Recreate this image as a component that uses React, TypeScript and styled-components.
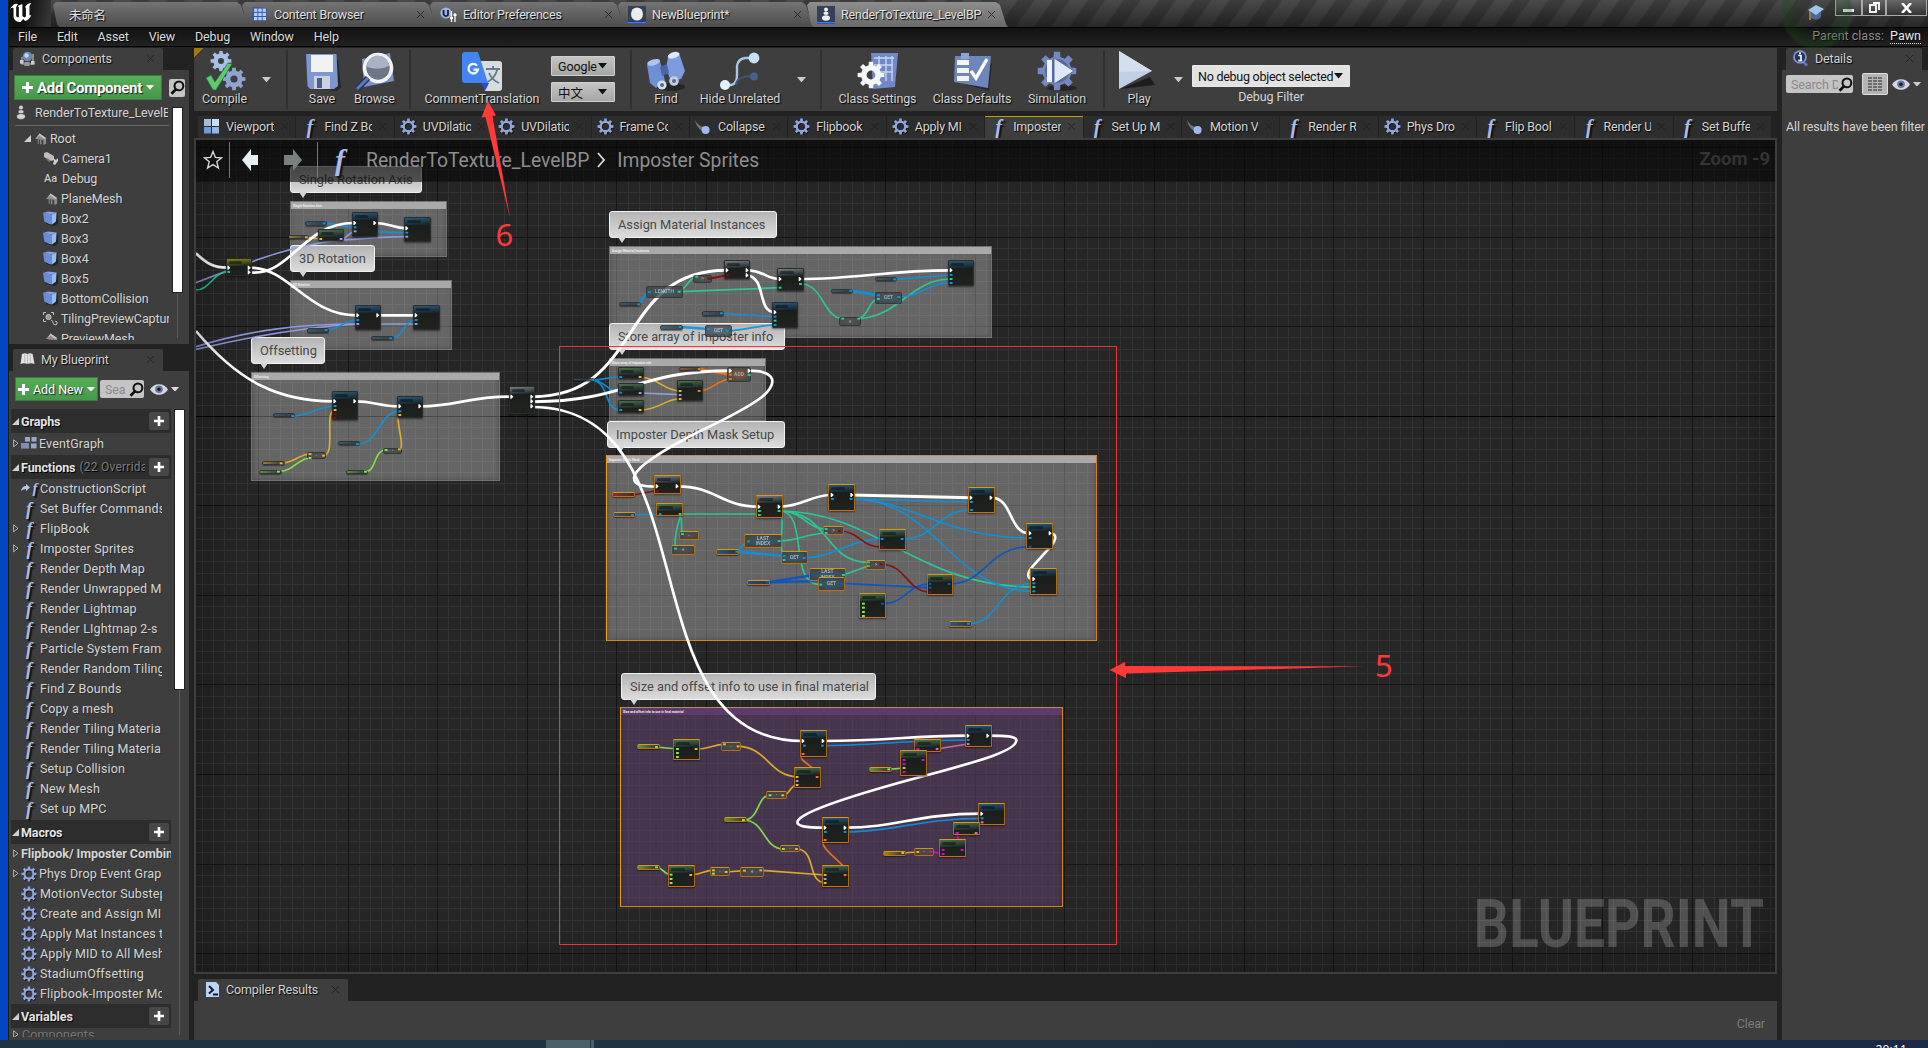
import React from "react";
import styled, { createGlobalStyle, css } from "styled-components";

const Global = createGlobalStyle`
  * { box-sizing: border-box; }
  body { margin: 0; background: #222; overflow: hidden; font-family: Roboto, "Noto Sans CJK SC", sans-serif; font-size: 13px; color: #d4d4d4; }
`;

/* ---------- shell ---------- */
const Desktop = styled.div`
  width: 1928px; height: 1048px; overflow: hidden; display: flex; flex-direction: column;
  background: #0445c0;
`;
const Win = styled.div`
  margin-left: 8px; height: 1040px; background: #222; display: flex; flex-direction: column;
  border-left: 1px solid #1a1a1a;
`;
const Taskbar = styled.div`
  height: 8px; background: linear-gradient(90deg, #20343f 0 40%, #1c2b45 80%, #1b2944);
  display: flex; overflow: hidden; color: #fff;
`;
const TaskItem = styled.div<{ $ml: number; $w: number }>`
  margin-left: ${p => p.$ml}px; width: ${p => p.$w}px; background: #4b6068;
`;
const Clock = styled.div`margin-left: auto; margin-right: 21px; font: 12px/14px "Open Sans", sans-serif; padding-top: 3px; letter-spacing: .2px;`;

/* ---------- title bar ---------- */
const TitleBar = styled.div`
  height: 28px; flex: none; display: flex; align-items: flex-end; position: relative;
  background: linear-gradient(180deg, rgba(0,0,0,0), rgba(0,0,0,.45)),
    repeating-linear-gradient(125deg, #4a4a4a 0 13px, #3c3c3c 15px 27px, #4a4a4a 29px);
  border-bottom: 1px solid #000;
`;
const Logo = styled.div`width: 42px; height: 27px; flex: none; background: linear-gradient(100deg,#111 40%,#3a3a3a);`;
const WinTab = styled.div<{ $w: number; $on?: boolean }>`
  width: ${p => p.$w}px; height: 25px; flex: none; display: flex; align-items: center; padding: 0 13px 0 12px; gap: 6px;
  margin-right: -9px; color: #e0e0e0; text-shadow: 1px 1px 1px #000; letter-spacing: -.2px; font-size: 12.5px;
  background: ${p => (p.$on ? "linear-gradient(#8e8e8e,#6a6a6a)" : "linear-gradient(#747474,#4c4c4c)")};
  clip-path: polygon(2px 3px, 5px 0, calc(100% - 12px) 0, calc(100% - 8px) 3px, calc(100% - 2px) 22px, 100% 100%, 8px 100%, 6px 22px);
`;
const TabText = styled.span<{ $pl?: number }>`flex: 1; overflow: hidden; white-space: nowrap; padding-left: ${p => p.$pl || 0}px;`;
const Close = styled.span`
  width: 7px; height: 7px; flex: none; opacity: .75;
  background: linear-gradient(45deg, transparent 44%, #1b1b1b 44% 56%, transparent 56%), linear-gradient(-45deg, transparent 44%, #1b1b1b 44% 56%, transparent 56%);
`;
const Glow = styled.div`
  position: absolute; right: 74px; top: -27px; width: 74px; height: 78px; border-radius: 50%; z-index: 2;
  background: radial-gradient(closest-side, rgba(20,70,20,.02) 40%, rgba(25,75,25,.38) 90%, transparent);
`;
const WinButtons = styled.div`
  align-self: flex-start; display: flex; height: 16px; margin-right: 1px;
`;
const WinButton = styled.div<{ $w: number }>`
  width: ${p => p.$w}px; height: 16px; border: 1px solid #aaa; border-top: 0; display: flex; align-items: center; justify-content: center;
  background: linear-gradient(#686868, #333);
`;
const MenuBar = styled.div`
  height: 19px; flex: none; display: flex; align-items: center; padding: 0 7px 2px 9px; gap: 20px; color: #dcdcdc; font-size: 12.5px; letter-spacing: -.15px;
  background: linear-gradient(#111,#222); border-bottom: 1px solid #000; text-shadow: 1px 1px 1px #000;
`;
const ParentClass = styled.div`margin-left: auto; display: flex; gap: 6px; color: #8c8c8c; letter-spacing: 0; b { font-weight: 400; color: #e8e8e8; border-bottom: 1px dotted #ddd; line-height: 14px; margin-top: 1px; }`;

/* ---------- panels ---------- */
const Body = styled.div`flex: 1; display: flex; padding-top: 1px; min-height: 0;`;
const Left = styled.div`width: 180px; display: flex; flex-direction: column; flex: none;`;
const Main = styled.div`width: 1583px; margin-left: 5px; display: flex; flex-direction: column; flex: none;`;
const Right = styled.div`width: 146px; margin-left: 5px; display: flex; flex-direction: column; flex: none;`;
const PanelTab = styled.div<{ $w: number; $mt?: number }>`
  width: ${p => p.$w}px; height: 22px; margin: ${p => p.$mt || 0}px 0 0 4px; background: #3e3e3e; flex: none;
  display: flex; align-items: center; gap: 6px; padding: 0 9px 1px 7px; text-shadow: 1px 1px 1px #000; border-radius: 2px 2px 0 0; font-size: 12.5px; letter-spacing: -.15px;
`;
const Panel = styled.div<{ $h?: number }>`
  background: #3e3e3e; ${p => (p.$h ? `height:${p.$h}px; flex:none;` : "flex: 1; min-height: 0;")} overflow: hidden; display: flex; flex-direction: column;
`;
const Bar = styled.div<{ $h: number; $pad: string; $gap?: number; $ml?: number }>`
  height: ${p => p.$h}px; flex: none; display: flex; align-items: center; padding: ${p => p.$pad}; gap: ${p => p.$gap || 0}px; margin-left: ${p => p.$ml || 0}px;
`;
const GreenButton = styled.div<{ $w: number; $h: number; $big?: boolean }>`
  width: ${p => p.$w}px; height: ${p => p.$h}px; flex: none; display: flex; align-items: center; justify-content: center; gap: 4px; white-space: nowrap;
  background: linear-gradient(#56ad57,#47984a); border: 1px solid #3b7c3d; color: #fff; text-shadow: 1px 1px 1px #123;
  ${p => (p.$big ? css`font-size: 15px; font-weight: 700; letter-spacing: -.3px;` : css`font-size: 12.5px; letter-spacing: -.05px;`)}
`;
const Search = styled.div<{ $w: number }>`
  width: ${p => p.$w}px; height: 18px; background: #c4c4c4; border-radius: 2px; color: #8a8a8a; display: flex; align-items: center;
  padding-left: 5px; overflow: hidden; white-space: nowrap; font-size: 12.5px; flex: none; letter-spacing: -.1px;
  span { flex: 1; overflow: hidden; }
`;
const SearchBtn = styled.div`width: 17px; height: 18px; background: #c4c4c4; border-radius: 2px; display: flex; align-items: center; justify-content: center;`;
const ScrollWrap = styled.div`flex: 1; display: flex; min-height: 0;`;
const List = styled.div<{ $w: number }>`width: ${p => p.$w}px; flex: none; overflow: hidden;`;
const Track = styled.div<{ $ml: number; $mt: number }>`
  margin: ${p => p.$mt}px 0 2px ${p => p.$ml}px; width: 12px; display: flex; justify-content: center;
  background: linear-gradient(#5a5a5a,#5a5a5a) center/1px 100% no-repeat;
`;
const Thumb = styled.div<{ $h: number }>`width: 11px; height: ${p => p.$h}px; background: #fff; border: 1px solid #222;`;
const Row = styled.div<{ $pl: number; $bold?: boolean; $h?: number; $gap?: number; $ls?: number; $dim?: boolean }>`
  height: ${p => p.$h || 20}px; padding: 0 0 1px ${p => p.$pl}px; display: flex; align-items: center; gap: ${p => p.$gap ?? 3}px; white-space: nowrap; letter-spacing: ${p => p.$ls ?? 0.13}px;
  font-size: 12.5px; font-weight: ${p => (p.$bold ? 700 : 400)}; text-shadow: 1px 1px 0 rgba(0,0,0,.3); ${p => (p.$dim ? "color: #777;" : "")}
  svg { flex: none; }
`;
const Clip = styled.span<{ $w?: number }>`overflow: hidden; white-space: nowrap; ${p => (p.$w ? `width:${p.$w}px;` : "")}`;
const Divider = styled.div`height: 1px; background: #6a6a6a; margin: 3px 0 3px 6px;`;
const Header = styled.div<{ $mt?: number }>`
  height: 24px; margin: ${p => p.$mt || 0}px 0 0 2px; background: #2d2d2d; display: flex; align-items: center; font-weight: 700; padding: 0 2px 0 1px; gap: 2px; color: #e4e4e4; font-size: 12.5px;
  text-shadow: 1px 1px 0 #000; white-space: nowrap; letter-spacing: -.1px;
  small { font-size: 12px; font-weight: 400; color: #7d7d7d; width: 66px; overflow: hidden; margin-left: 2px; letter-spacing: .25px; }
`;
const PlusBox = styled.div`width: 20px; height: 18px; background: #474747; margin-left: auto; display: flex; align-items: center; justify-content: center; border-radius: 2px; flex: none;`;

/* ---------- toolbar ---------- */
const Toolbar = styled.div`
  height: 63px; background: linear-gradient(135deg, #a07818 7px, transparent 7px) 0 0/18px 18px no-repeat, #3e3e3e; display: flex; flex: none;
`;
const Tool = styled.div<{ $w: number; $ml?: number }>`
  width: ${p => p.$w}px; margin-left: ${p => p.$ml || 0}px; flex: none; display: flex; flex-direction: column; align-items: center; padding-top: 3px; white-space: nowrap;
  font-size: 12.5px; letter-spacing: -.12px; text-shadow: 1px 1px 1px #000; svg { flex: none; } span { margin-top: -1px; line-height: 15px; }
`;
const Sep = styled.div<{ $ml: number }>`width: 2px; margin: 2px 0 2px ${p => p.$ml}px; background: #303030; flex: none;`;
const Arrow = styled.div<{ $w: number }>`width: ${p => p.$w}px; flex: none; display: flex; align-items: center; justify-content: center;`;
const Combos = styled.div<{ $ml: number; $pt: number; $w: number; $gap?: number }>`
  margin-left: ${p => p.$ml}px; width: ${p => p.$w}px; padding-top: ${p => p.$pt}px; display: flex; flex-direction: column; gap: ${p => p.$gap ?? 6}px; align-items: center; font-size: 12.5px; letter-spacing: -.1px;
`;
const Combo = styled.div<{ $h: number; $light?: boolean }>`
  height: ${p => p.$h}px; width: 100%; color: #111; display: flex; align-items: center; justify-content: space-between; padding: 0 ${p => (p.$light ? "6px 0 5px" : "7px 0 6px")}; border-radius: 1px; white-space: nowrap;
  ${p => (p.$light ? "letter-spacing: -.25px;" : "")}
  background: ${p => (p.$light ? "#e2e2e2" : "linear-gradient(#c4c4c4,#a6a6a6)")}; border: 1px solid ${p => (p.$light ? "#e8e8e8" : "#cfcfcf")};
  svg { flex: none; }
`;

/* ---------- document tabs ---------- */
const DocTabs = styled.div`height: 22px; margin: 5px 4px 0; display: flex; gap: 1px; flex: none;`;
const DocTab = styled.div<{ $on?: boolean }>`
  width: 97.4px; flex: none; height: 22px; display: flex; align-items: center; padding: 0 0 2px 5px; background: ${p => (p.$on ? "#3e3e3e" : "#2d2d2d")};
  border-top: 1px solid ${p => (p.$on ? "#b8a000" : "#2d2d2d")}; text-shadow: 1px 1px 1px #000; font-size: 12.5px; letter-spacing: -.2px;
`;
const DocIcon = styled.div`width: 17px; height: 18px; margin-right: 6px; display: flex; align-items: center; justify-content: center; flex: none;`;
const DocText = styled.div`width: 48px; margin-right: 7px; overflow: hidden; white-space: nowrap; flex: none;`;
const FGlyph = styled.span<{ $s: number; $w?: number; $mr?: number }>`
  font: italic 700 ${p => p.$s}px/1 "Liberation Serif", serif; color: #a9bcec; display: inline-block; width: ${p => p.$w || 16}px; margin-right: ${p => p.$mr || 0}px; text-align: center; flex: none; text-shadow: 2px 2px 1px #111; letter-spacing: 0;
`;

/* ---------- graph ---------- */
const Graph = styled.div`
  height: 836px; flex: none; background: #262626; border: 2px solid #3e3e3e; position: relative; overflow: hidden;
`;
const Canvas = styled.div`position: absolute; left: -196px; top: -140px; width: 1928px; height: 1048px;`;
const Layer = styled.svg`position: absolute; left: 0; top: 0; width: 1928px; height: 1048px; pointer-events: none;`;
const Vignette = styled.div`position: absolute; inset: 0; box-shadow: inset 0 0 50px 8px rgba(0,0,0,.33);`;
const Crumbs = styled.div`
  position: absolute; left: 0; top: 0; right: 0; height: 42px; background: rgba(8,8,8,.62); display: flex; align-items: center; color: #8e8e8e; font-size: 19.3px; white-space: nowrap; padding: 0 5px 2px 7px;
  svg { flex: none; }
`;
const VLine = styled.div<{ $l: number; $r: number }>`width: 1px; height: 36px; background: #777; margin: 0 ${p => p.$r}px 0 ${p => p.$l}px;`;
const ZoomText = styled.div`margin-left: auto; font-weight: 700; font-size: 18.5px; color: #343434; margin-top: -3px;`;
const Watermark = styled.div`
  position: absolute; right: 11px; bottom: 14px; font: 700 66px/66px Roboto, sans-serif; color: rgba(255,255,255,.2); transform: scaleX(.834); transform-origin: 100% 50%; white-space: nowrap;
`;
type Box = { $x: number; $y: number; $w: number; $h: number };
const place = css<Box>`position: absolute; left: ${p => p.$x}px; top: ${p => p.$y}px; width: ${p => p.$w}px; height: ${p => p.$h}px;`;
const CommentBox = styled.div<Box & { $sel?: boolean; $purple?: boolean }>`
  ${place}
  background: ${p => (p.$purple ? "rgba(97,68,108,.56)" : "rgba(255,255,255,.29)")};
  border: 1px solid ${p => (p.$sel ? "#d8821c" : "rgba(140,140,140,.35)")};
  ${p => (p.$sel ? "border-left-color: #eaa010; border-top-color: #b09060;" : "")}
  box-shadow: inset 0 0 5px rgba(0,0,0,.25);
`;
const CommentHead = styled.div<{ $purple?: boolean }>`
  height: 7px; background: ${p => (p.$purple ? "#5f3b6b" : "#a9a9a9")}; color: #eee; font: 700 3.2px/9px Roboto, sans-serif; padding-left: 2px; white-space: nowrap; overflow: hidden;
`;
const Bubble = styled.div<Box>`
  ${place} border: 1px solid #f2f2f2; border-radius: 3px; background: linear-gradient(#b4b4b4,#dcdcdc); color: #484848; font-size: 12.8px; display: flex; align-items: center; padding: 0 0 1px 8px; white-space: nowrap;
  &::after { content: ""; position: absolute; left: 8px; top: 100%; border: 4px solid transparent; border-top: 6px solid #d6d6d6; border-bottom: 0; }
`;
const tones: Record<string, string> = {
  blue: "#2c5878", green: "#4f7048", gray: "#7b7b7b", yellow: "#8c8a08", red: "#8a3020", orange: "#9c5a20", navy: "#1c4a9a", gold: "#a48828", lime: "#5f9a38",
};
const edge = css<{ $sel?: boolean }>`
  border: 1px solid ${p => (p.$sel ? "#a86c14" : "#2a2e2e")};
  ${p => (p.$sel ? "border-top-color: #d49a18; border-bottom-color: #cc6e0c;" : "")}
`;
const NodeBox = styled.div<Box & { $tone: string; $sel?: boolean }>`
  ${place} ${edge} border-radius: 1px;
  background: linear-gradient(175deg, ${p => tones[p.$tone]} 0, rgba(20,34,40,.95) 100%) 0 0/100% 7px no-repeat, linear-gradient(#181c1a, #20221e);
  box-shadow: 0 1px 2px rgba(0,0,0,.5);
  &::after { content: ""; position: absolute; left: 2px; top: 2px; width: 55%; height: 3px; background: rgba(10,20,24,.55); border-radius: 2px; filter: blur(.6px); }
`;
const Pill = styled.div<Box & { $tone: string; $sel?: boolean }>`
  ${place} ${edge} border-radius: 2px;
  background: linear-gradient(90deg, ${p => tones[p.$tone]}, #30383a 90%); box-shadow: 0 1px 1px rgba(0,0,0,.5); opacity: ${p => (p.$sel ? 1 : 0.85)};
`;
const Op = styled.div<Box & { $sel?: boolean; $tone?: string; $two?: boolean }>`
  ${place} ${edge} border-radius: 2px; color: #aab4b8; font: 700 5px/5.5px Roboto, sans-serif; text-align: center; padding: 0 ${p => (p.$two ? 10 : 0)}px;
  display: flex; align-items: center; justify-content: center; opacity: ${p => (p.$sel ? 0.95 : 0.8)};
  background: radial-gradient(${p => (p.$tone === "orange" ? "#7a5130" : p.$tone === "blue" ? "#345566" : "#4c4c4c")} 30%, #424444 75%);
`;

const C = { w: "#fff", b: "#0d93dc", t: "#24cf9c", y: "#e8b428", g: "#86e84c", o: "#f47414", l: "#929ee8", r: "#880a0a", n: "#0a54c4", p: "#d870a4", m: "#f000c4" } as const;
type Ck = keyof typeof C;
type N = [number, number, number, number, string];
type O = [number, number, number, number, string, string?];
interface Section {
  x: number; y: number; sel?: boolean;
  comments: [number, number, number, number, string, boolean?, boolean?][];
  bubbles: [number, number, number, number, string][];
  nodes: N[]; pills: N[]; ops: O[];
  wires: [Ck, string, number?][];
  pins: [Ck, string][];
}

/* Section coordinates are graph units; three units make one pixel at this zoom. */
const sections: Section[] = [
  {
    x: 190, y: 170,
    comments: [[300, 94, 470, 167, "Single Rotation Axis"], [301, 330, 487, 210, "3D Rotation"], [183, 606, 747, 327, "Offsetting"]],
    bubbles: [[300, -12, 396, 81, "Single Rotation Axis"], [300, 225, 255, 81, "3D Rotation"], [183, 501, 222, 81, "Offsetting"]],
    nodes: [[486, 127, 78, 74, "blue"], [642, 142, 80, 74, "blue"], [384, 178, 78, 37, "green"], [108, 264, 78, 54, "yellow"], [495, 405, 78, 75, "blue"], [669, 405, 81, 75, "blue"], [427, 663, 77, 87, "blue"], [621, 679, 78, 65, "blue"], [957, 648, 78, 84, "gray"]],
    pills: [[344, 153, 66, 14, "blue"], [293, 195, 64, 13, "gold"], [352, 473, 66, 14, "blue"], [543, 498, 68, 13, "blue"], [250, 730, 67, 13, "blue"], [445, 814, 67, 13, "blue"], [217, 874, 68, 13, "gold"], [207, 899, 68, 13, "lime"], [469, 899, 67, 13, "lime"]],
    ops: [[352, 846, 58, 22, "·"], [580, 834, 58, 17, "·"]],
    wires: [
      ["l", "M18,338 C180,275 340,212 490,208 C550,204 590,200 648,200"], ["l", "M18,530 C180,480 330,462 503,462 H675"], ["l", "M18,538 C180,500 330,472 503,462"], ["l", "M455,207 C475,204 475,186 495,184"],
      ["b", "M402,160 C470,162 520,190 650,188", 6], ["y", "M349,202 L392,207"], ["t", "M18,360 C60,360 70,306 112,306"],
      ["b", "M408,480 C450,480 460,450 503,450"], ["b", "M600,505 C645,505 635,452 678,450"], ["b", "M308,738 C360,738 385,708 435,708"], ["b", "M502,822 C570,822 565,724 629,724"],
      ["y", "M273,880 C310,880 330,852 360,852"], ["g", "M265,905 C310,905 325,864 360,864"], ["y", "M400,857 C440,857 400,720 435,720"], ["g", "M526,905 C560,905 550,840 588,840"], ["y", "M628,838 C648,838 612,735 629,735"],
      ["w", "M18,250 C50,280 70,293 112,293", 8], ["w", "M180,307 C300,320 340,159 490,159", 8], ["w", "M180,293 C300,293 350,436 500,436", 8], ["w", "M556,159 C600,159 610,175 648,175", 8], ["w", "M566,436 H675", 8],
      ["w", "M18,483 C150,640 270,694 432,694", 8], ["w", "M497,694 C550,694 570,709 627,709", 8], ["w", "M692,709 C800,709 830,680 962,680", 8],
    ],
    pins: [["w", "494,159 554,159 650,175 116,293 177,293 177,307 503,436 563,436 678,436 434,694 494,694 629,709 689,709 965,680 1025,680 1025,694 1025,709"], ["b", "495,172 402,160 650,188 503,450 408,480 678,450 602,505 308,738 435,708 502,822 629,724"], ["l", "495,184 453,207 650,200 503,462 678,462"], ["y", "392,207 349,202 360,852 400,857 435,720 273,880 628,838 629,735"], ["g", "265,905 360,864 526,905 588,840"], ["r", "435,732 435,744"], ["t", "116,306"]],
  },
  {
    x: 560, y: 190,
    comments: [[148, 169, 1150, 277, "Assign Material Instances"], [148, 504, 472, 188, "Store array of imposter info"]],
    bubbles: [[148, 63, 504, 81, "Assign Material Instances"], [148, 399, 528, 81, "Store array of imposter info"], [141, 693, 535, 81, "Imposter Depth Mask Setup"]],
    nodes: [[493, 210, 77, 57, "gray"], [651, 234, 81, 69, "gray"], [636, 336, 78, 78, "blue"], [1164, 210, 78, 78, "blue"], [174, 530, 78, 37, "green"], [174, 580, 78, 38, "green"], [174, 630, 78, 38, "green"], [351, 570, 78, 63, "green"]],
    pills: [[176, 337, 66, 13, "blue"], [427, 362, 67, 15, "blue"], [300, 404, 68, 14, "blue"], [814, 296, 67, 12, "blue"], [946, 262, 67, 13, "blue"], [358, 531, 67, 13, "orange"], [40, 565, 66, 10, "blue"]],
    ops: [[258, 287, 110, 36, "LENGTH", "blue"], [400, 254, 58, 24, ">"], [838, 380, 67, 27, "+"], [945, 305, 80, 36, "GET", "blue"], [436, 404, 80, 36, "GET", "blue"], [502, 530, 73, 45, "ADD", "orange"]],
    wires: [
      ["t", "M357,305 L660,293"], ["t", "M357,305 C385,290 385,265 410,260"], ["t", "M722,282 C790,282 790,384 848,386"], ["t", "M896,386 C930,375 925,330 955,327"], ["t", "M896,386 C1020,380 1050,268 1172,267"],
      ["b", "M236,343 C250,325 255,310 268,306", 8], ["b", "M484,370 L645,380"], ["b", "M360,411 L445,417", 8], ["b", "M502,423 C560,420 590,406 645,405"], ["b", "M872,302 L955,316", 8], ["b", "M1004,268 L1172,255"], ["b", "M1016,321 C1090,318 1100,280 1172,279"], ["r", "M446,266 L500,256", 6],
      ["b", "M98,570 C130,570 140,562 182,561"], ["b", "M98,570 C140,575 140,605 182,608"], ["b", "M98,570 C150,580 130,660 182,660"], ["y", "M240,561 C300,565 310,602 360,603"], ["y", "M240,660 C300,660 310,627 360,627"], ["l", "M240,609 L360,614"], ["o", "M417,537 L510,554", 8], ["o", "M417,603 C460,600 470,570 510,567"],
      ["w", "M-82,620 C250,620 170,241 500,241", 9], ["w", "M-82,635 C200,635 230,542 508,542", 9], ["w", "M561,241 C610,241 620,267 658,267", 8], ["w", "M561,256 C620,262 590,366 645,367", 8], ["w", "M720,267 C900,267 980,241 1172,241", 8],
    ],
    pins: [["w", "501,241 561,241 561,256 660,267 720,267 645,367 1173,241 511,542 567,542"], ["b", "268,306 236,343 484,370 645,380 360,411 445,417 502,423 645,405 872,302 955,316 1004,268 1173,255 1173,279 1016,321 98,570 182,561 182,608 182,660"], ["t", "357,305 410,260 660,293 721,282 848,386 896,386 955,327 1173,267 645,392 567,555"], ["y", "240,561 240,660 360,603 360,627"], ["l", "240,609 360,615"], ["o", "417,537 511,554 511,567 417,603"], ["r", "446,266 502,256"]],
  },
  {
    x: 590, y: 430, sel: true,
    comments: [[49, 76, 1473, 557, "Imposter Depth Mask", true]],
    bubbles: [],
    nodes: [[191, 136, 81, 56, "gray"], [497, 196, 81, 69, "gray"], [199, 220, 81, 39, "green"], [866, 296, 81, 64, "green"], [1010, 431, 79, 64, "green"], [808, 490, 81, 76, "green"], [715, 161, 81, 80, "blue"], [1133, 170, 81, 78, "blue"], [1309, 278, 81, 79, "blue"], [1320, 413, 81, 80, "blue"]],
    pills: [[66, 187, 69, 15, "red"], [69, 247, 68, 16, "blue"], [379, 356, 69, 17, "blue"], [472, 449, 70, 15, "navy"], [1077, 574, 69, 17, "blue"]],
    ops: [[268, 304, 60, 28, "-"], [244, 346, 73, 31, "+"], [463, 313, 115, 43, "LAST INDEX", "blue"], [574, 364, 82, 40, "GET", "blue"], [699, 289, 62, 28, ">"], [658, 415, 112, 40, "LAST INDEX", "blue"], [683, 441, 81, 41, "GET", "blue"], [827, 389, 60, 29, ">"]],
    wires: [
      ["r", "M125,194 C160,194 170,183 200,183"], ["b", "M127,255 L210,252"], ["t", "M270,252 H508"], ["t", "M270,256 C280,270 270,290 277,312"], ["t", "M272,256 C262,290 252,320 256,356"],
      ["t", "M568,243 C640,243 650,297 708,297"], ["t", "M568,243 C590,260 560,340 582,390"], ["t", "M568,243 C660,243 590,464 692,464"], ["t", "M568,243 C720,243 700,397 835,397"], ["t", "M568,243 C860,243 980,471 1330,471"], ["t", "M567,333 C620,333 650,311 708,309"], ["t", "M760,435 L835,408"],
      ["b", "M440,365 C455,350 460,340 475,334", 7], ["b", "M440,365 L582,378", 8], ["b", "M642,384 C730,384 780,327 876,327"], ["b", "M936,327 C1040,327 1040,240 1143,240"],
      ["b", "M785,207 L1143,216"], ["b", "M785,207 C960,207 1060,324 1319,324"], ["b", "M785,207 C1040,207 1080,484 1330,484"], ["b", "M1135,581 C1230,581 1220,462 1330,460"],
      ["n", "M532,457 L670,435", 7], ["n", "M532,457 L692,453", 7], ["n", "M754,460 L1020,473"], ["n", "M877,521 C950,521 950,462 1020,462"], ["n", "M1077,462 C1190,462 1190,351 1319,350"], ["r", "M748,303 C810,303 810,351 876,351"], ["r", "M873,403 C950,403 950,486 1020,486"],
      ["w", "M261,169 C380,169 390,230 507,230", 8], ["w", "M566,230 C640,230 660,195 725,195", 8], ["w", "M785,195 L1143,203", 9], ["w", "M1203,203 C1270,203 1255,310 1319,310", 8], ["w", "M1380,310 C1400,312 1402,325 1380,352 L1330,407 C1310,430 1310,445 1328,447", 8],
    ],
    pins: [["w", "201,169 261,169 507,230 567,230 726,195 785,195 1143,203 1203,203 1320,310 1380,310 1331,447"], ["b", "127,255 210,252 727,207 783,207 1144,216 1144,240 475,334 440,365 582,378 642,384 876,327 936,327 1320,324 1331,460 1331,484 1135,581"], ["t", "270,252 508,243 508,255 567,243 277,312 256,356 567,333 708,297 708,309 582,390 692,464 835,397 835,408 760,435 1331,471"], ["n", "532,457 668,435 692,453 754,460 1020,462 1020,473 1077,462 877,521 1320,350"], ["r", "125,194 201,183 748,303 876,351 873,403 1020,486"], ["g", "820,521 820,533 820,546 820,558"]],
  },
  {
    x: 590, y: 660, sel: true,
    comments: [[91, 142, 1328, 599, "Size and offset info to use in final material", true, true]],
    bubbles: [[93, 39, 765, 81, "Size and offset info to use in final material"]],
    nodes: [[250, 236, 81, 64, "green"], [629, 209, 81, 80, "blue"], [611, 320, 81, 64, "green"], [973, 236, 81, 38, "green"], [931, 269, 81, 77, "green"], [1124, 194, 81, 66, "blue"], [695, 470, 81, 79, "blue"], [1165, 428, 81, 67, "blue"], [1090, 487, 81, 39, "green"], [1048, 538, 81, 54, "green"], [233, 614, 81, 65, "green"], [695, 614, 81, 65, "green"]],
    pills: [[142, 253, 70, 16, "lime"], [838, 320, 70, 16, "lime"], [403, 472, 70, 16, "lime"], [142, 615, 70, 16, "lime"], [880, 572, 70, 16, "gold"]],
    ops: [[394, 245, 60, 27, "·"], [528, 394, 62, 24, "·"], [571, 556, 60, 21, "·"], [361, 622, 61, 28, "·"], [451, 622, 73, 31, "+"], [973, 563, 61, 23, "·"]],
    wires: [
      ["g", "M199,261 L262,267"], ["y", "M318,267 C360,267 370,253 403,253"], ["y", "M444,259 C530,259 540,350 621,350"], ["y", "M578,406 C600,406 600,375 621,375"], ["g", "M460,480 C510,480 500,406 540,406"], ["g", "M460,480 C525,480 520,567 580,567"], ["y", "M619,567 C680,567 650,668 705,668"],
      ["g", "M199,622 C220,622 220,644 243,644"], ["y", "M302,645 C335,645 340,631 370,631"], ["y", "M408,636 L463,632"], ["y", "M512,631 L705,645"], ["o", "M682,350 C700,330 610,300 639,282"], ["o", "M765,645 C800,630 670,560 705,540"],
      ["b", "M698,257 C850,257 950,240 1134,240"], ["b", "M765,516 C900,516 1000,475 1175,475"], ["p", "M1041,267 L1134,252"], ["g", "M896,328 L942,324"], ["y", "M938,579 L983,576"], ["m", "M1020,575 L1060,581"], ["m", "M1102,519 C1100,540 1112,540 1116,565"], ["m", "M983,267 L999,300"],
      ["w", "M698,243 C900,243 950,227 1134,227", 8], ["w", "M1193,227 C1250,227 1276,228 1279,240 C1282,270 1180,300 1010,346 C800,402 650,450 625,480 C612,500 650,503 705,503", 8], ["w", "M765,503 C920,503 980,461 1175,461", 8],
    ],
    pins: [["w", "639,243 699,243 1134,227 1193,227 705,503 765,503 1175,461"], ["b", "643,257 697,257 1134,240 706,516 765,516 1176,475"], ["g", "199,261 262,267 262,279 262,291 460,480 540,406 580,567 199,622 243,644 243,657 243,669 896,328 942,324 370,641"], ["y", "318,267 403,253 444,259 621,351 621,375 578,406 619,567 302,645 370,631 408,636 463,632 512,631 705,645 705,669 938,579 983,576"], ["o", "639,282 681,351 705,540 765,645"], ["l", "621,363 705,657"], ["p", "1041,267 1134,252 1176,487 1158,519"], ["m", "983,267 999,300 942,300 942,312 942,336 1101,519 1116,570 1059,570 1059,582 1022,575"]],
  },
];

const GridLines = () => {
  const step = 89.6 / 8;
  const out: React.ReactNode[] = [];
  const x0 = 258.5, y0 = 147.4;
  for (let i = -6; i < 136; i++) if (i % 8) out.push(<rect key={"v" + i} x={Math.floor(x0 + i * step)} y={140} width={1} height={834} fill="#343434" />);
  for (let i = -1; i < 75; i++) if (i % 8) out.push(<rect key={"h" + i} x={196} y={Math.floor(y0 + i * step)} width={1581} height={1} fill="#343434" />);
  for (let i = 0; i < 17; i++) out.push(<rect key={"V" + i} x={Math.floor(x0 + i * 89.6)} y={140} width={1} height={834} fill="#151515" />);
  for (let i = 0; i < 10; i++) out.push(<rect key={"H" + i} x={196} y={Math.floor(y0 + i * 89.6)} width={1581} height={1} fill={i === 3 ? "#000" : "#151515"} />);
  return <>{out}</>;
};

const box = (s: Section, x: number, y: number, w: number, h: number) => ({ $x: Math.round(s.x + x / 3), $y: Math.round(s.y + y / 3), $w: Math.round(w / 3), $h: Math.round(h / 3) });

const BlueprintGraph = () => (
  <Canvas>
    <Layer><GridLines /></Layer>
    {sections.map((s, i) => (
      <React.Fragment key={i}>
        {s.comments.map(([x, y, w, h, t, sel, purple]) => (
          <CommentBox key={t} {...box(s, x, y, w, h)} $sel={sel} $purple={purple}><CommentHead $purple={purple}>{t}</CommentHead></CommentBox>
        ))}
        {s.bubbles.map(([x, y, w, h, t]) => <Bubble key={t} {...box(s, x, y, w, h)}>{t}</Bubble>)}
      </React.Fragment>
    ))}
    <Layer fill="none">
      {sections.map((s, i) => (
        <g key={i} transform={`translate(${s.x} ${s.y}) scale(.33333)`}>
          {s.wires.map(([c, d, w], k) => <path key={k} d={d} stroke={C[c]} strokeWidth={w || 5} opacity={c === "w" ? 1 : 0.92} />)}
        </g>
      ))}
      <g stroke="#fff" strokeWidth="2.7">
        <path d="M532,407 C715,407 622,741 803,741" />
        <path d="M749,370.7 C778,371 777,384 762,397 C738,415 706,427 683,440 C650,458 634,470 634,478 C634,486 645,486.5 657,486.7" />
      </g>
    </Layer>
    {sections.map((s, i) => (
      <React.Fragment key={i}>
        {s.pills.map(([x, y, w, h, t], k) => <Pill key={"p" + k} {...box(s, x, y, w, h)} $tone={t} $sel={s.sel} />)}
        {s.nodes.map(([x, y, w, h, t], k) => <NodeBox key={"n" + k} {...box(s, x, y, w, h)} $tone={t} $sel={s.sel} />)}
        {s.ops.map(([x, y, w, h, t, tone], k) => <Op key={"o" + k} {...box(s, x, y, w, h)} $sel={s.sel} $tone={tone} $two={t.includes(" ")}>{t}</Op>)}
      </React.Fragment>
    ))}
    <Layer>
      {sections.map((s, i) => s.pins.map(([c, list]) => list.split(" ").map((pt, k) => {
        const [x, y] = pt.split(",").map(Number);
        const px = s.x + x / 3, py = s.y + y / 3;
        return c === "w"
          ? <path key={`${i}${c}${k}`} d={`M${px - 1.3},${py - 2} h1 l2,2 l-2,2 h-1z`} fill="#fff" />
          : <rect key={`${i}${c}${k}`} x={px - 1.3} y={py - 1} width={2.8} height={2} fill={C[c]} />;
      })))}
    </Layer>
  </Canvas>
);

const Marks = styled.svg`position: absolute; left: 0; top: 0; width: 1928px; height: 1048px; pointer-events: none;`;

/* ---------- icons ---------- */
const Down = ({ c = "#ccc", s = 9 }: { c?: string; s?: number }) => <svg width={s} height={s * 0.6} viewBox="0 0 10 6"><path d="M0,0 H10 L5,6z" fill={c} /></svg>;
const Plus = ({ s = 11 }: { s?: number }) => <svg width={s} height={s} viewBox="0 0 12 12"><path d="M4.4,0h3.2v4.4H12v3.2H7.6V12H4.4V7.6H0V4.4h4.4z" fill="#fff" /></svg>;
const Mag = ({ s = 15 }: { s?: number }) => <svg width={s} height={s} viewBox="0 0 16 16" fill="none" stroke="#111"><circle cx="9.5" cy="6.3" r="4.7" strokeWidth="2.2" /><path d="M6.2,10 L1.6,14.6" strokeWidth="3" /></svg>;
const Eye = () => <svg width="18" height="11" viewBox="0 0 18 11"><path d="M0,5.5 C4,-1.5 14,-1.5 18,5.5 C14,12.5 4,12.5 0,5.5z" fill="#d6d6dc" /><circle cx="9" cy="5.2" r="3.8" fill="#6377a4" /><circle cx="9" cy="5.2" r="1.7" fill="#151a2c" /></svg>;
const Tri = () => <svg width="7" height="7"><path d="M7,0V7H0z" fill="#d0d0d0" /></svg>;
const Exp = () => <svg width="6" height="9"><path d="M.6,.8 V7.8 L5,4.3z" fill="none" stroke="#bbb" strokeWidth=".9" /></svg>;
const gearPath = (teeth: number, R: number, r: number) => {
  const p: string[] = [];
  for (let i = 0; i < teeth; i++) [[-0.3, r], [-0.2, R], [0.2, R], [0.3, r]].forEach(([o, q]) => {
    const a = ((i + o) / teeth) * Math.PI * 2;
    p.push(`${(Math.sin(a) * q).toFixed(2)},${(-Math.cos(a) * q).toFixed(2)}`);
  });
  return "M" + p.join("L") + "z";
};
const Gear = ({ s = 16 }: { s?: number }) => (
  <svg width={s} height={s} viewBox="-8 -8 16 16"><g transform="translate(.8 .9)" fill="#161616"><path fillRule="evenodd" d={gearPath(8, 7.6, 5.6) + "M3.4,0A3.4,3.4 0 1 0 -3.4,0A3.4,3.4 0 1 0 3.4,0z"} /></g><path fillRule="evenodd" fill="#8fa7dc" d={gearPath(8, 7.6, 5.6) + "M3.4,0A3.4,3.4 0 1 0 -3.4,0A3.4,3.4 0 1 0 3.4,0z"} /></svg>
);
const Pawn = () => <svg width="12" height="15" viewBox="0 0 12 15"><g fill="#d2d2d2" stroke="#222" strokeWidth=".4"><circle cx="6" cy="2.6" r="2.3" /><ellipse cx="6" cy="6.8" rx="2.8" ry="2" /><ellipse cx="6" cy="11.6" rx="4.3" ry="2.8" /></g></svg>;
const House = () => <svg width="13" height="14" viewBox="0 0 14 14"><path d="M1,7 L6,1 L13,6 V12 L10,13.5 V8 L8,7.5 V13 L4,12 V7z" fill="#8c8c8c" /><path d="M6,1 L13,6 L11,7 L5.5,3.2 L2,7.6z" fill="#c4c4c4" /><path d="M5,7.5h1.6v5H5z" fill="#444" /></svg>;
const Cam = () => <svg width="15" height="14" viewBox="0 0 15 14"><path d="M0,1 L3,0 L10,4 V8 L7,9 L0,5z" fill="#bdbdbd" /><path d="M9,6 L12,8 L14,6 L14,9 L11,13 L9,12 L10,9z" fill="#cfcfcf" /><path d="M3,7 L6,9.5" stroke="#777" strokeWidth="2" /></svg>;
const Aa = styled.span`font-size: 11px; font-weight: 500; width: 15px; color: #ccc; letter-spacing: 0;`;
const Cube = () => <svg width="15" height="15" viewBox="0 0 15 15"><path d="M3,3 L15,2.5 L15,12.5 L11,15 L3,13z" fill="#15171c" opacity=".7" /><path d="M0,2 L9,3.6 V13.4 L6,13 L1.4,10.6z" fill="#6c8cd6" /><path d="M0,2 L5,.6 L13.6,1.6 L9,3.6z" fill="#86a2e4" /><path d="M9,3.6 L13.6,1.6 L13,10.5 L9,13.4z" fill="#92bdee" /></svg>;
const Capt = () => <svg width="15" height="14" viewBox="0 0 15 14" fill="none" stroke="#c2c2c2"><path d="M.5,3V.5H3M8,.5h2.5V3M.5,7v2.5H3" /><circle cx="5.5" cy="5" r="2.6" fill="#999" /><path d="M8,8l2,1.5v2l2,1.5 2,-1v-2l-2,-1" /></svg>;
const GraphIc = () => <svg width="16" height="13" viewBox="0 0 16 13" fill="#9aa8c8"><rect x="4" y="0" width="5" height="4.6" /><rect x="10.5" y="0" width="5" height="4.6" /><rect x="0" y="6" width="8" height="5.6" fill="#7d8db8" /><rect x="10" y="6.4" width="5.6" height="5" /></svg>;
const Book = () => <svg width="15" height="13" viewBox="0 0 15 13"><path d="M2,1 Q5,-.5 7.5,1 Q10,-.5 12.6,1 L14.5,11 Q11,9.5 7.5,11 Q4,9.5 .5,11z" fill="#e2e2e2" /><path d="M7.5,1V11M4.7,1v8.5M10.3,1v8.5" stroke="#aaa" strokeWidth=".7" /></svg>;
const Comp = () => <svg width="16" height="16" viewBox="0 0 16 16"><circle cx="7.5" cy="5.5" r="4.8" fill="#6e88b4" /><circle cx="6.5" cy="4.5" r="2.2" fill="#c6d6f0" /><path d="M2,6V13H13V3" fill="none" stroke="#bbb" strokeWidth="1.2" /><rect x="4.5" y="11" width="5" height="4" fill="#999" /><rect x="0" y="9" width="3.6" height="3.6" fill="#ccc" /><rect x="11" y="10" width="3.6" height="3.6" fill="#ccc" /></svg>;
const Info = () => <svg width="16" height="17" viewBox="0 0 16 17"><path d="M9.5,11 L14,15.5" stroke="#5c7ac4" strokeWidth="2.6" /><circle cx="7" cy="7" r="6" fill="#26345c" stroke="#7c98dc" strokeWidth="1.7" /><path d="M5.3,5.5H8V10.2M5.2,10.6H9.2" stroke="#fff" strokeWidth="1.6" fill="none" /><rect x="6" y="2.4" width="2" height="1.8" fill="#fff" /></svg>;
const Script = () => <svg width="15" height="16" viewBox="0 0 15 16"><path d="M1,0H11L14,3V15H1z" fill="#bcd4f4" /><path d="M4,4 L8,8 L4,11.5" fill="none" stroke="#10182c" strokeWidth="2" /><path d="M8,12.5H13" stroke="#10182c" strokeWidth="2" /></svg>;
const ViewIc = () => <svg width="15" height="15" viewBox="0 0 15 15"><rect width="7" height="7" fill="#a8b8d8" /><rect x="8" width="7" height="7" fill="#c8dcf8" /><rect y="8" width="7" height="6.5" fill="#7898d8" /><rect x="8" y="8" width="7" height="6.5" fill="#9ab4e4" /></svg>;
const Comet = () => <svg width="16" height="16" viewBox="0 0 16 16"><path d="M0,1 Q4,8 9,8 L7,12 Q1,8 0,1z" fill="#aab" opacity=".55" /><circle cx="10.6" cy="11" r="4" fill="#a3b8f0" /></svg>;
const GridIc = () => <svg width="16" height="15" viewBox="0 0 16 15"><path d="M1,0 L15,1 L14,14 L0,13z" fill="#3558a8" /><g fill="#b4cdf6">{[0, 1, 2].map(r => [0, 1, 2].map(c => <rect key={`${r}${c}`} x={2 + c * 4.3} y={1.6 + r * 4.2} width="3.4" height="3.2" />))}</g></svg>;
const PrefIc = () => <svg width="17" height="16" viewBox="0 0 17 16"><circle cx="6" cy="6" r="5.6" fill="#9cb4e6" /><path d="M3.6,3V7.5Q6,10.5 8,8V3" fill="none" stroke="#182038" strokeWidth="1.8" /><path d="M11.5,4v11M15,6v9" stroke="#eee" strokeWidth="1.4" /><rect x="10" y="10" width="3" height="2" fill="#fff" /><rect x="13.5" y="7" width="3" height="2" fill="#fff" /></svg>;
const AssetIc = ({ pawn }: { pawn?: boolean }) => (
  <svg width="18" height="18" viewBox="0 0 18 18"><rect width="18" height="18" fill="#343f58" /><rect y="16" width="18" height="1.4" fill="#3a7cff" />
    {pawn ? <g fill="#eee"><circle cx="9" cy="3.4" r="2" /><ellipse cx="9" cy="7.2" rx="2.6" ry="1.7" /><ellipse cx="9" cy="12" rx="4" ry="2.8" /></g> : <ellipse cx="9" cy="8" rx="6" ry="6.6" fill="#ececec" />}
  </svg>
);
const big = { width: 42, height: 41, viewBox: "0 0 42 41" };
const CompileIc = () => <svg {...big}><g transform="translate(17 10)"><path fillRule="evenodd" d={gearPath(8, 10.5, 7.8) + "M3,0A3,3 0 1 0 -3,0A3,3 0 1 0 3,0z"} fill="#a9bfe6" /></g><g transform="translate(30 28)"><path fillRule="evenodd" d={gearPath(8, 11.5, 8.6) + "M3.6,0A3.6,3.6 0 1 0 -3.6,0A3.6,3.6 0 1 0 3.6,0z"} fill="#8ea3cf" /></g><path d="M2,27 L7,24 L11,31 L24,12 L28,13 L12,39 L9,39z" fill="#5fc96e" stroke="#2c6a38" strokeWidth=".7" /></svg>;
const SaveIc = () => <svg {...big}><path d="M8,37 L36,40 L40,36 L37,8z" fill="#1b1b1b" opacity=".6" /><path d="M5,3H35.5L37,35L33,38H9L6.5,35z" fill="#7f97d0" /><path d="M10,4H32V21H10z" fill="#f2f2f2" /><path d="M13,25H29V38H13z" fill="#c9d0e2" /><path d="M16,27H21V37H16z" fill="#4a5c8c" /></svg>;
const BrowseIc = () => <svg {...big}><path d="M8,8L36,2L40,30L10,36z" fill="#7c92c4" /><circle cx="24" cy="17" r="13.5" fill="#6f7686" stroke="#f1f3f8" strokeWidth="3.6" /><path d="M13,16 A11,11 0 0 1 35,15 Q25,20 13,16z" fill="#a9b2c4" /><path d="M14,27 L3,38" stroke="#26335c" strokeWidth="6" /><path d="M14,27 L3,38" stroke="#5f79b8" strokeWidth="3" /></svg>;
const TransIc = () => <svg {...big}><path d="M17,10H38Q41,10 41,13V37Q41,40 38,40H24z" fill="#d8dbdf" /><path d="M20,32 L28,32 L24,40z" fill="#2c4cc4" /><path d="M4,1H17L27,32H4Q1,32 1,29V4Q1,1 4,1z" fill="#4285f0" /><path d="M16,14.6 A4.8,4.8 0 1 0 17,18.6 H12.4" fill="none" stroke="#fff" strokeWidth="2.2" /><path d="M25,18H39M32,15V18M36.5,18Q34,27 26.5,31M28,22Q31,29 38,32" stroke="#5f7d8c" strokeWidth="1.8" fill="none" /></svg>;
const FindIc = () => <svg {...big}><ellipse cx="26" cy="36" rx="14" ry="4" fill="#151515" opacity=".6" /><path d="M2,14 L15,10 L20,30 L11,37 L5,32z" fill="#6f8fd4" /><path d="M23,6 L34,2 L40,20 L36,28 L26,30 L21,18z" fill="#7f9be0" /><ellipse cx="8.5" cy="11.5" rx="6.6" ry="3" fill="#b0c4f2" transform="rotate(-16 8 11)" /><ellipse cx="28.5" cy="4.4" rx="6" ry="3" fill="#dfe8fc" transform="rotate(-18 28 4)" /><path d="M15,16L22,13L24,22L17,25z" fill="#4b66a8" /><circle cx="17" cy="34" r="4.6" fill="#d6deee" /><circle cx="29" cy="30" r="4.8" fill="#c3cde4" /><circle cx="17" cy="34" r="2" fill="#5a6a8c" /><circle cx="29" cy="30" r="2" fill="#5a6a8c" /></svg>;
const HideIc = () => <svg {...big}><path d="M6,34 H12 Q18,33 18,24 V15 Q19,8 26,7 H34" stroke="#a9c8e6" strokeWidth="2.4" fill="none" /><path d="M17,34 Q18,25 34,25" stroke="#405478" strokeWidth="2.2" fill="none" /><circle cx="6" cy="34" r="5" fill="#e4f3fb" /><circle cx="35" cy="7" r="5.4" fill="#c5e3f6" /><circle cx="35" cy="25.5" r="4" fill="#47608c" /></svg>;
const SettingsIc = () => <svg {...big}><path d="M14,2H41L38,36L16,38z" fill="#7189c4" /><path d="M17,7H37M17,14H36M17,21H36M22,5V28M29,5V30M35,5V30" stroke="#c6d6f4" strokeWidth="1.4" /><g transform="translate(14 24)"><path fillRule="evenodd" d={gearPath(8, 13.5, 10) + "M4.4,0A4.4,4.4 0 1 0 -4.4,0A4.4,4.4 0 1 0 4.4,0z"} fill="#f6f7fa" /></g></svg>;
const DefaultsIc = () => <svg {...big}><path d="M10,32 L38,40 L41,12z" fill="#151515" opacity=".5" /><path d="M4,5H40L37,37L3,31z" fill="#6f86bc" /><path d="M10,2H18V8H10z" fill="#8fa4d4" /><path d="M6,9H18V14H6zM6,17H18V22H6zM6,25H18V30H6z" fill="#f2f4fa" /><path d="M20,20 L25,27 L36,8" stroke="#fff" strokeWidth="3.4" fill="none" /></svg>;
const SimIc = () => <svg {...big}><ellipse cx="26" cy="37" rx="15" ry="3" fill="#151515" opacity=".6" /><g transform="translate(21 20)"><path d={gearPath(8, 19.5, 14.5)} fill="#7389c0" /><circle r="12" fill="#54689c" /></g><path d="M11,9H16V31H11z" fill="#eef2fa" /><path d="M18,7 L38,20 L18,33z" fill="#dfe8f6" stroke="#5b6c98" /></svg>;
const PlayIc = () => <svg {...big}><path d="M2,38 L37,34 L32,26z" fill="#111" opacity=".7" /><path d="M1,0 L34,20 L1,38z" fill="#bfcfe4" /><path d="M1,0 L34,20 L1,21z" fill="#d3dfee" /></svg>;
const LogoSvg = styled.svg`margin: 3px 0 0 1px;`;
const Unreal = () => <LogoSvg width="23" height="20" viewBox="0 0 26 20" preserveAspectRatio="none"><path d="M0,6 Q4,0 9,1 L7,4 V13 Q8,15 10,14 V4 L8.5,3 L14,1 V13 L16,14.5 L18,13.5 V5 L17,4 Q20,0 24,0 L22,3 V12.5 L24,12 Q22,17 17,18 L15,16 L12,19 Q5,19 4,14 V5 Q2,4 0,6z" fill="#fff" /></LogoSvg>;
const HatSvg = styled.svg`margin: 0 10px 5px auto;`;
const Hat = () => <HatSvg width="18" height="18" viewBox="0 0 18 18"><path d="M4,9V14Q10,18 14,13V8z" fill="#4d6a94" /><path d="M1,6 L9,1 L17,5 L9,11z" fill="#a4c6ee" /><path d="M3,7V16" stroke="#d8a850" strokeWidth="1.2" /></HatSvg>;
const FwdSvg = styled.svg`margin-left: 25px;`;
const ChevSvg = styled.svg`margin: 0 11px 0 8px;`;

const docTabs: [string, string][] = [["v", "Viewport"], ["f", "Find Z Bounds"], ["g", "UVDilation"], ["g", "UVDilation"], ["g", "Frame Count"], ["c", "Collapse"], ["g", "Flipbook"], ["g", "Apply MI"], ["f", "Imposter"], ["f", "Set Up M"], ["c", "Motion V"], ["f", "Render R"], ["g", "Phys Dro"], ["f", "Flip Bool"], ["f", "Render U"], ["f", "Set Buffer"]];
const docIcon = (k: string) => (k === "v" ? <ViewIc /> : k === "g" ? <Gear s={17} /> : k === "c" ? <Comet /> : <FGlyph $s={20}>f</FGlyph>);
const functions = ["Set Buffer Commands", ">FlipBook", ">Imposter Sprites", "Render Depth Map", "Render Unwrapped Mesh", "Render Lightmap", "Render LIghtmap 2-s", "Particle System Frames", "Render Random Tiling", "Find Z Bounds", "Copy a mesh", "Render Tiling Materia", "Render Tiling Materia", "Setup Collision", "New Mesh", "Set up MPC"];
const macros = ["MotionVector Substeps", "Create and Assign MI", "Apply Mat Instances to", "Apply MID to All Meshes", "StadiumOffsetting", "Flipbook-Imposter Mode"];

const Section = ({ title, note, mt }: { title: string; note?: string; mt?: number }) => (
  <Header $mt={mt}><Tri /><span>{title}</span>{note && <small>{note}</small>}<PlusBox><Plus s={10} /></PlusBox></Header>
);
const DebugLabel = styled.span`margin-top: 2px; line-height: 15px;`;
const Clear = styled.span`margin-left: auto; color: #7c7c7c; font-size: 12.5px; letter-spacing: -.1px;`;
const Notice = styled(Clip)`font-size: 12.5px; letter-spacing: -.15px;`;

export default function App() {
  return (
    <Desktop>
      <Global />
      <Win>
        <TitleBar>
          <Logo><Unreal /></Logo>
          <WinTab $w={198}><TabText $pl={6}>未命名</TabText></WinTab>
          <WinTab $w={197}><GridIc /><TabText>Content Browser</TabText><Close /></WinTab>
          <WinTab $w={197}><PrefIc /><TabText>Editor Preferences</TabText><Close /></WinTab>
          <WinTab $w={198}><AssetIc /><TabText>NewBlueprint*</TabText><Close /></WinTab>
          <WinTab $w={203} $on><AssetIc pawn /><TabText>RenderToTexture_LevelBP</TabText><Close /></WinTab>
          <Glow />
          <Hat />
          <WinButtons>
            <WinButton $w={27}><svg width="11" height="9"><path d="M0,6h11v3H0z" fill="#fff" /></svg></WinButton>
            <WinButton $w={24}><svg width="11" height="11" fill="none" stroke="#fff" strokeWidth="1.8"><rect x="1" y="3" width="6" height="7" /><path d="M4,1h6v7" /></svg></WinButton>
            <WinButton $w={41}><svg width="11" height="10" stroke="#fff" strokeWidth="2.6"><path d="M1,0L10,10M10,0L1,10" /></svg></WinButton>
          </WinButtons>
        </TitleBar>
        <MenuBar>
          {["File", "Edit", "Asset", "View", "Debug", "Window", "Help"].map(m => <span key={m}>{m}</span>)}
          <ParentClass>Parent class: <b>Pawn</b></ParentClass>
        </MenuBar>
        <Body>
          <Left>
            <PanelTab $w={150}><Comp /><TabText>Components</TabText><Close /></PanelTab>
            <Panel $h={274}>
              <Bar $h={34} $pad="1px 4px 0 5px" $gap={7}>
                <GreenButton $w={148} $h={25} $big><Plus s={11} />Add Component <Down c="#fff" s={8} /></GreenButton>
                <SearchBtn><Mag /></SearchBtn>
              </Bar>
              <ScrollWrap>
                <List $w={160}>
                  <Row $pl={6} $h={18} $gap={8} $ls={-0.05}><Pawn /><Clip $w={133}>RenderToTexture_LevelBP</Clip></Row>
                  <Divider />
                  <Row $pl={15} $gap={3} $ls={-0.1}><Tri /><House />Root</Row>
                  <Row $pl={35} $ls={-0.1}><Cam />Camera1</Row>
                  <Row $pl={35} $ls={-0.1}><Aa>Aa</Aa>Debug</Row>
                  <Row $pl={36} $ls={-0.1}><House />PlaneMesh</Row>
                  {["Box2", "Box3", "Box4", "Box5", "BottomCollision"].map(b => <Row key={b} $pl={34} $ls={-0.1}><Cube />{b}</Row>)}
                  <Row $pl={34} $ls={-0.1}><Capt /><Clip $w={108}>TilingPreviewCapture</Clip></Row>
                  <Row $pl={36} $ls={-0.1}><House />PreviewMesh</Row>
                </List>
                <Track $ml={2} $mt={3}><Thumb $h={186} /></Track>
              </ScrollWrap>
              <Bar $h={4} $pad="0" />
            </Panel>
            <PanelTab $w={150} $mt={5}><Book /><TabText>My Blueprint</TabText><Close /></PanelTab>
            <Panel>
              <Bar $h={38} $pad="0 0 2px 6px" $gap={2}>
                <GreenButton $w={83} $h={24}><Plus s={11} />Add New <Down c="#fff" s={8} /></GreenButton>
                <Search $w={44}><span>Sea</span><Mag /></Search>
                <Bar $h={18} $pad="0 0 0 4px" $gap={3}><Eye /><Down c="#ddd" s={8} /></Bar>
              </Bar>
              <ScrollWrap>
                <List $w={162}>
                  <Section title="Graphs" />
                  <Row $pl={4} $h={22} $gap={2}><Exp /><GraphIc />EventGraph</Row>
                  <Section title="Functions" note="(22 Overridable)" />
                  <Row $pl={12} $gap={0}><svg width="9" height="9"><path d="M0,7 Q1,2 5,2 V0 L9,3.5 L5,7 V5 Q2,5 0,7z" fill="#b8c6e8" /></svg><FGlyph $s={15} $w={10}>f</FGlyph>ConstructionScript</Row>
                  {functions.map((f, i) => (
                    <Row key={i} $pl={f[0] === ">" ? 4 : 12}>{f[0] === ">" && <Exp />}<FGlyph $s={18} $w={f[0] === ">" ? 15 : 16}>f</FGlyph><Clip $w={122}>{f.replace(">", "")}</Clip></Row>
                  ))}
                  <Section title="Macros" mt={1} />
                  <Row $pl={4} $bold $ls={-0.05} $gap={2}><Exp />Flipbook/ Imposter Combined</Row>
                  <Row $pl={4} $gap={2}><Exp /><Gear /><Clip $w={122}>Phys Drop Event Graph</Clip></Row>
                  {macros.map(m => <Row key={m} $pl={12} $gap={3}><Gear /><Clip $w={122}>{m}</Clip></Row>)}
                  <Section title="Variables" />
                  <Row $pl={4} $dim $h={14}><Exp />Components</Row>
                </List>
                <Track $ml={2} $mt={0}><Thumb $h={281} /></Track>
              </ScrollWrap>
              <Bar $h={3} $pad="0" />
            </Panel>
          </Left>
          <Main>
            <Toolbar>
              <Tool $w={61}><CompileIc /><span>Compile</span></Tool><Arrow $w={22}><Down /></Arrow>
              <Sep $ml={9} />
              <Tool $w={40} $ml={14}><SaveIc /><span>Save</span></Tool>
              <Tool $w={65}><BrowseIc /><span>Browse</span></Tool>
              <Sep $ml={2} />
              <Tool $w={124} $ml={9}><TransIc /><span>CommentTranslation</span></Tool>
              <Combos $ml={7} $pt={8} $w={64}><Combo $h={20}>Google<Down c="#111" /></Combo><Combo $h={20}>中文<Down c="#111" /></Combo></Combos>
              <Sep $ml={15} />
              <Tool $w={52} $ml={8}><FindIc /><span>Find</span></Tool>
              <Tool $w={96}><HideIc /><span>Hide Unrelated</span></Tool><Arrow $w={26}><Down /></Arrow>
              <Sep $ml={6} />
              <Tool $w={93} $ml={9}><SettingsIc /><span>Class Settings</span></Tool>
              <Tool $w={96}><DefaultsIc /><span>Class Defaults</span></Tool>
              <Tool $w={74}><SimIc /><span>Simulation</span></Tool>
              <Sep $ml={9} />
              <Tool $w={52} $ml={8}><PlayIc /><span>Play</span></Tool><Arrow $w={26}><Down /></Arrow>
              <Combos $ml={1} $pt={17} $w={158} $gap={0}><Combo $h={22} $light>No debug object selected<Down c="#111" /></Combo><DebugLabel>Debug Filter</DebugLabel></Combos>
            </Toolbar>
            <DocTabs>
              {docTabs.map(([k, t], i) => <DocTab key={i} $on={i === 8}><DocIcon>{docIcon(k)}</DocIcon><DocText>{t}</DocText><Close /></DocTab>)}
            </DocTabs>
            <Graph>
              <BlueprintGraph />
              <Vignette />
              <Watermark>BLUEPRINT</Watermark>
              <Crumbs>
                <svg width="20" height="20" viewBox="0 0 20 20"><path d="M10,1.5 L12.4,7.4 L18.6,7.8 L13.8,11.8 L15.4,18 L10,14.6 L4.6,18 L6.2,11.8 L1.4,7.8 L7.6,7.4z" fill="none" stroke="#d8d8d8" strokeWidth="1.4" /></svg>
                <VLine $l={6} $r={12} />
                <svg width="17" height="22" viewBox="0 0 17 22"><path d="M0,11 L9,0 V6 H16 V16 H9 V22z" fill="#e6f0f4" /></svg>
                <FwdSvg width="18" height="22" viewBox="0 0 18 22"><path d="M18,11 L9,0 V6 H0 V16 H9 V22z" fill="#7c7f80" /></FwdSvg>
                <VLine $l={15} $r={13} />
                <FGlyph $s={30} $w={18} $mr={17}>f</FGlyph>
                <span>RenderToTexture_LevelBP</span>
                <ChevSvg width="9" height="16" viewBox="0 0 9 16"><path d="M1,1 L7,8 L1,15" fill="none" stroke="#ddd" strokeWidth="1.8" /></ChevSvg>
                <span>Imposter Sprites</span>
                <ZoomText>Zoom -9</ZoomText>
              </Crumbs>
            </Graph>
            <PanelTab $w={150} $mt={5}><Script /><TabText>Compiler Results</TabText><Close /></PanelTab>
            <Panel><Bar $h={42} $pad="2px 12px 0 0"><Clear>Clear</Clear></Bar></Panel>
          </Main>
          <Right>
            <PanelTab $w={136}><Info /><TabText>Details</TabText><Close /></PanelTab>
            <Panel>
              <Bar $h={28} $pad="0 0 0 4px" $gap={9}>
                <Search $w={67}><span>Search Details</span><Mag /></Search>
                <svg width="26" height="22"><rect x=".5" y=".5" width="25" height="21" rx="1" fill="#b4b4b4" stroke="#ddd" />{[0, 1, 2, 3, 4].map(r => [0, 1, 2].map(c => <rect key={`${r}${c}`} x={6 + c * 5} y={4 + r * 3} width="4" height="2" fill="#6c6c6c" />))}</svg>
                <Bar $h={18} $pad="0" $gap={3} $ml={-5}><Eye /><Down c="#ccc" s={8} /></Bar>
              </Bar>
              <Bar $h={56} $pad="0 3px 0 4px"><Notice>All results have been filtered</Notice></Bar>
            </Panel>
          </Right>
        </Body>
      </Win>
      <Taskbar><TaskItem $ml={546} $w={44} /><TaskItem $ml={1} $w={3} /><Clock>20:11</Clock></Taskbar>
      <Marks fill="#ff3a38">
        <rect x="559.5" y="346.5" width="557" height="598" fill="none" stroke="#f03434" />
        <path d="M1109.5,670 L1125,662 V666 L1364,666.3 L1126,673.5 V678z" />
        <path d="M488,101 L496,115.5 L492.5,116 L510,218 L485.5,117 L481.5,117.5z" />
        <g fontFamily="Noto Sans" fontSize="31"><text x="1375" y="677">5</text><text x="495.5" y="246">6</text></g>
      </Marks>
    </Desktop>
  );
}
